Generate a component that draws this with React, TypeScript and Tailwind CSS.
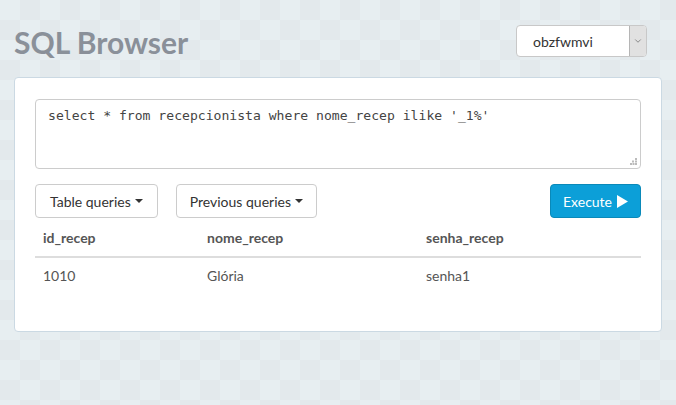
import { ChevronDown } from "lucide-react";

const rows = [{ id: "1010", nome: "Glória", senha: "senha1" }];

function Caret() {
  return (
    <span className="ml-1 inline-block h-0 w-0 border-x-[4px] border-t-[4px] border-x-transparent border-t-[#333] align-middle" />
  );
}

export default function App() {
  return (
    <div className="h-[405px] w-[676px] overflow-hidden bg-[#e5ecef] bg-[repeating-conic-gradient(#e3e9ec_0_25%,#e7eef1_0_50%)] bg-[length:40px_40px] font-['Lato',sans-serif] text-[#555]">
      <div className="flex items-start justify-between px-[14px] pt-[24px]">
        <h1 className="text-[30px] font-bold leading-[36px] text-[#8a9099]">SQL Browser</h1>
        <div className="mr-[15px] mt-[1px] flex h-[32px] w-[131px] overflow-hidden rounded-[4px] border border-[#c8c8c8] bg-white">
          <div className="flex flex-1 items-center pl-[16px] text-[14px] text-[#333]">obzfwmvi</div>
          <div className="flex w-[17px] items-center justify-center border-l border-[#b5b5b5] bg-[#e1e1e1]">
            <ChevronDown size={10} strokeWidth={1.5} className="text-[#555]" />
          </div>
        </div>
      </div>

      <div className="mx-[14px] mt-[17px] h-[255px] rounded-[4px] border border-[#cbd9e3] bg-white px-[20px] pt-[21px]">
        <div className="relative h-[70px] rounded-[4px] border border-[#cccccc] px-[12px] pt-[6px] font-['DejaVu_Sans_Mono',monospace] text-[13.1px] text-[#444]">
          select * from recepcionista where nome_recep ilike '_1%'
          <svg className="absolute bottom-[3px] right-[3px]" width="7" height="7" viewBox="0 0 7 7">
            <rect x="5" y="0" width="2" height="2" fill="#bbb" />
            <rect x="2" y="2.5" width="2" height="2" fill="#bbb" />
            <rect x="5" y="2.5" width="2" height="2" fill="#bbb" />
            <rect x="0" y="5" width="2" height="2" fill="#bbb" />
            <rect x="2.5" y="5" width="2" height="2" fill="#bbb" />
            <rect x="5" y="5" width="2" height="2" fill="#bbb" />
          </svg>
        </div>

        <div className="mt-[15px] flex items-center">
          <button className="flex h-[34px] items-center rounded-[4px] border border-[#cccccc] bg-white px-[14px] text-[14px] text-[#333]">
            Table queries <Caret />
          </button>
          <button className="ml-[18px] flex h-[34px] items-center rounded-[4px] border border-[#cccccc] bg-white px-[13px] text-[14px] text-[#333]">
            Previous queries <Caret />
          </button>
          <button className="ml-auto flex h-[34px] items-center rounded-[4px] border border-[#0a89b9] bg-[#0c9fd8] px-[12px] text-[14px] text-white">
            Execute
            <svg className="ml-[5px]" width="11" height="13" viewBox="0 0 11 13">
              <path d="M0 0 L11 6.5 L0 13 Z" fill="white" />
            </svg>
          </button>
        </div>

        <table className="mt-[2px] w-full text-left text-[14px] leading-[20px]">
          <thead>
            <tr className="border-b-2 border-[#dddddd]">
              <th className="w-[164px] px-[8px] py-[8px] font-bold">id_recep</th>
              <th className="w-[219px] px-[8px] py-[8px] font-bold">nome_recep</th>
              <th className="px-[8px] py-[8px] font-bold">senha_recep</th>
            </tr>
          </thead>
          <tbody>
            {rows.map((r) => (
              <tr key={r.id}>
                <td className="px-[8px] py-[8px]">{r.id}</td>
                <td className="px-[8px] py-[8px]">{r.nome}</td>
                <td className="px-[8px] py-[8px]">{r.senha}</td>
              </tr>
            ))}
          </tbody>
        </table>
      </div>
    </div>
  );
}
